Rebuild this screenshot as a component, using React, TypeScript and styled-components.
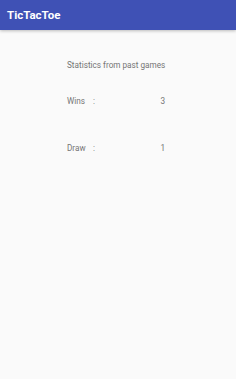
import React, { FC } from 'react';
import styled, { createGlobalStyle } from 'styled-components';

const GlobalStyle = createGlobalStyle`
  html, body {
    margin: 0;
    padding: 0;
    background: #fafafa;
  }
  body {
    font-family: Roboto, 'Noto Sans', sans-serif;
  }
`;

interface IStat {
  label: string;
  value: number;
}

const stats: IStat[] = [
  { label: 'Wins', value: 3 },
  { label: 'Draw', value: 1 }
];

const App: FC = () => (
  <>
    <GlobalStyle />
    <SPage>
      <SAppBar>
        <STitle>TicTacToe</STitle>
      </SAppBar>
      <SContent>
        <SHeading>Statistics from past games</SHeading>
        {stats.map((s) => (
          <SRow key={s.label}>
            <SLabel>{s.label}</SLabel>
            <SColon>:</SColon>
            <SValue>{s.value}</SValue>
          </SRow>
        ))}
      </SContent>
    </SPage>
  </>
);

export default App;

const SPage = styled.div`
  width: 236px;
  height: 379px;
  background: #fafafa;
  overflow: hidden;
`;

const SAppBar = styled.header`
  display: flex;
  align-items: center;
  height: 30px;
  padding: 0 7px;
  background: #3f51b5;
  box-shadow: 0 1px 3px rgba(0, 0, 0, 0.25);
`;

const STitle = styled.h1`
  margin: 0;
  color: #fff;
  font-size: 11.5px;
  font-weight: 700;
`;

const SContent = styled.main`
  display: flex;
  flex-direction: column;
  width: 98px;
  margin: 0 0 0 67px;
  padding-top: 29px;
  color: #757575;
  font-size: 8.2px;
`;

const SHeading = styled.div`
  height: 12px;
  line-height: 12px;
  margin-bottom: 24px;
  white-space: nowrap;
`;

const SRow = styled.div`
  display: grid;
  grid-template-columns: 26px 1fr auto;
  height: 12px;
  line-height: 12px;
  margin-bottom: 35px;
`;

const SLabel = styled.span``;

const SColon = styled.span``;

const SValue = styled.span`
  text-align: right;
`;
